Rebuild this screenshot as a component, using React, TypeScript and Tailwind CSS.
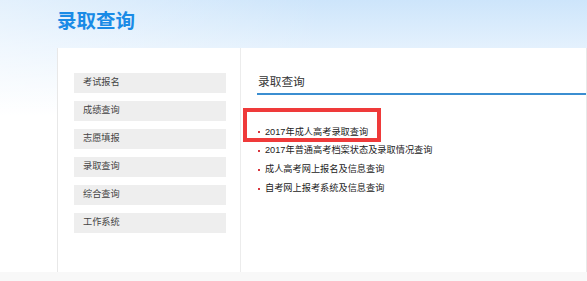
import React from 'react';

const menu = ['考试报名', '成绩查询', '志愿填报', '录取查询', '综合查询', '工作系统'];

const links = [
  '2017年成人高考录取查询',
  '2017年普通高考档案状态及录取情况查询',
  '成人高考网上报名及信息查询',
  '自考网上报考系统及信息查询',
];

const font = { fontFamily: '"Liberation Sans", "Noto Sans CJK SC", sans-serif' };

export default function App() {
  return (
    <div
      className="relative w-[587px] h-[281px] overflow-hidden bg-[linear-gradient(to_right,rgba(255,255,255,0.45),rgba(255,255,255,0)_55%),linear-gradient(to_bottom,#cde5fb_0px,#e4f1fd_48px,#ffffff_115px)]"
      style={font}
    >
      {/* Header */}
      <div className="h-[48px] pl-[57px] pt-[11px]">
        <h1 className="text-[19.5px] leading-[20px] font-bold text-[#1a8be6]">录取查询</h1>
      </div>

      {/* Panel */}
      <div className="ml-[57px] h-[224px] flex bg-white border-l border-r border-[#e8e8e8]">
        {/* Sidebar */}
        <div className="w-[183px] shrink-0 border-r border-[#ececec] pl-[16px] pt-[25px]">
          <ul className="flex flex-col gap-[8px]">
            {menu.map((m) => (
              <li
                key={m}
                className="w-[152px] h-[20px] bg-[#eeeeee] pl-[9px] flex items-center text-[9.2px] text-[#444]"
              >
                {m}
              </li>
            ))}
          </ul>
        </div>

        {/* Content */}
        <div className="flex-1 pl-[16px] pt-[26px]">
          <div className="pb-[3px] border-b-2 border-[#3b8ed1]">
            <h2 className="text-[11.7px] leading-[16px] text-[#333] pl-[1px]">录取查询</h2>
          </div>
          <ul className="mt-[28px] flex flex-col">
            {links.map((l) => (
              <li key={l} className="h-[18.8px] flex items-center text-[9.2px] text-[#222]">
                <span className="w-[2px] h-[2px] bg-[#d9363e] ml-[1px] mr-[5px]" />
                {l}
              </li>
            ))}
          </ul>
        </div>
      </div>

      {/* Bottom strip */}
      <div className="h-[9px] bg-[#f8f8f8]" />

      {/* Red annotation box */}
      <div className="absolute left-[243px] top-[108px] w-[138px] h-[34px] border-[4px] border-[#ef3a3a]" />
    </div>
  );
}
